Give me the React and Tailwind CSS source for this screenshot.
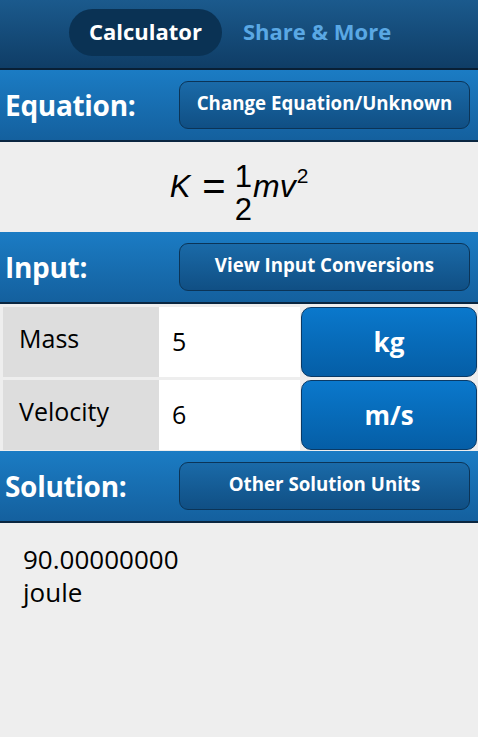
const font = { fontFamily: "'Open Sans', 'DejaVu Sans', sans-serif" };
const mathFont = { fontFamily: "'Liberation Sans', Arial, sans-serif" };

const SectionBar = ({ label, action }) => (
  <div className="h-[72px] flex items-center border-b-2 border-[#0a2640] bg-gradient-to-b from-[#1b7cc4] to-[#14609e]">
    <div className="w-[179px] pl-[5px] text-white font-bold text-[28px] tracking-[-0.3px]">
      {label}
    </div>
    <button className="w-[291px] h-[48px] rounded-[9px] border border-[#0b3457] bg-gradient-to-b from-[#1a6aa8] to-[#104f84] text-white font-bold text-[18.7px] pb-[4px]">
      {action}
    </button>
  </div>
);

const InputRow = ({ name, value, unit }) => (
  <div className="flex h-[70px]">
    <div className="w-[156px] ml-[3px] bg-[#dddddd] flex items-center pl-[16px] pb-[6px] text-[25px] text-black">
      {name}
    </div>
    <div className="w-[141px] bg-white flex items-center pl-[13px] text-[25px] text-black">
      {value}
    </div>
    <button className="w-[176px] ml-[1px] rounded-[10px] border border-[#0a3a66] bg-gradient-to-b from-[#0a78cc] to-[#055ea6] text-white font-bold text-[26px]">
      {unit}
    </button>
  </div>
);

export default function App() {
  return (
    <div className="w-[478px] h-[737px] bg-[#eeeeee] overflow-hidden" style={font}>
      <div className="h-[70px] flex items-start pt-[9px] border-b-2 border-[#081f35] bg-gradient-to-b from-[#1b5a8d] to-[#0f3d66]">
        <div className="ml-[69px] w-[153px] h-[47px] rounded-full bg-[#0a3254] flex items-center justify-center text-white font-bold text-[22px] pb-[2px]">
          Calculator
        </div>
        <div className="ml-[21px] h-[47px] flex items-center pb-[2px] text-[#5aa8e4] font-bold text-[22px]">
          Share &amp; More
        </div>
      </div>

      <SectionBar label="Equation:" action="Change Equation/Unknown" />

      <div className="h-[90px] flex items-start justify-center text-black" style={mathFont}>
        <span className="italic text-[31px] leading-none mt-[29px]">K</span>
        <span className="text-[40px] leading-none mt-[24px] ml-[12px] mr-[9px]">=</span>
        <span className="flex flex-col items-center gap-[2px] text-[31px] leading-none mt-[19px]">
          <span>1</span>
          <span>2</span>
        </span>
        <span className="italic text-[32px] leading-none mt-[28px] ml-[1px]">mv</span>
        <span className="text-[21px] leading-none mt-[23px] ml-[1px]">2</span>
      </div>

      <SectionBar label="Input:" action="View Input Conversions" />

      <div className="pt-[3px] pb-[1px] flex flex-col gap-[3px]">
        <InputRow name="Mass" value="5" unit="kg" />
        <InputRow name="Velocity" value="6" unit="m/s" />
      </div>

      <SectionBar label="Solution:" action="Other Solution Units" />

      <div className="pl-[23px] pt-[20px] text-[26px] leading-[33px] text-black">
        <div>90.00000000</div>
        <div>joule</div>
      </div>
    </div>
  );
}
